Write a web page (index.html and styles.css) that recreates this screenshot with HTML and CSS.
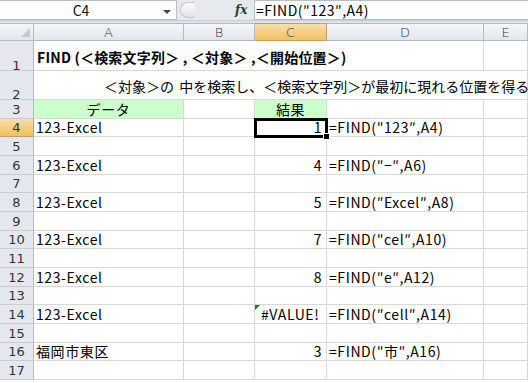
FILE: index.html
```html
<!DOCTYPE html>
<html lang="ja">
<head>
  <meta charset="UTF-8" />
  <title>FIND</title>
  <link rel="stylesheet" href="styles.css">
</head>
<body>
  <div class="formula-bar">
    <div class="name-box">
      <span class="ref">C4</span>
      <span class="drop"></span>
    </div>
    <div class="splitter"><span class="knob"></span></div>
    <div class="fx">fx</div>
    <div class="formula">=FIND(″123″,A4)</div>
  </div>
  <div class="gap"></div>

  <div class="sheet">
    <div class="corner"><span class="tri"></span></div>
    <div class="ch">A</div>
    <div class="ch">B</div>
    <div class="ch active">C</div>
    <div class="ch">D</div>
    <div class="ch">E</div>

    <div class="rh tall">1</div>
    <div class="c title span4">FIND (＜検索文字列＞ , ＜対象＞ ,＜開始位置＞)</div>
    <div class="c"></div>

    <div class="rh tall">2</div>
    <div class="c note span5">＜対象＞の 中を検索し、＜検索文字列＞が最初に現れる位置を得る</div>

    <div class="rh">3</div>
    <div class="c green center">データ</div>
    <div class="c"></div>
    <div class="c green center">結果</div>
    <div class="c"></div>
    <div class="c"></div>

    <div class="rh active">4</div>
    <div class="c">123-Excel</div>
    <div class="c"></div>
    <div class="c num selected">1<span class="handle"></span></div>
    <div class="c">=FIND(″123″,A4)</div>
    <div class="c"></div>

    <div class="rh">5</div>
    <div class="c"></div><div class="c"></div><div class="c"></div><div class="c"></div><div class="c"></div>

    <div class="rh">6</div>
    <div class="c">123-Excel</div>
    <div class="c"></div>
    <div class="c num">4</div>
    <div class="c">=FIND(″−″,A6)</div>
    <div class="c"></div>

    <div class="rh">7</div>
    <div class="c"></div><div class="c"></div><div class="c"></div><div class="c"></div><div class="c"></div>

    <div class="rh">8</div>
    <div class="c">123-Excel</div>
    <div class="c"></div>
    <div class="c num">5</div>
    <div class="c">=FIND(″Excel″,A8)</div>
    <div class="c"></div>

    <div class="rh">9</div>
    <div class="c"></div><div class="c"></div><div class="c"></div><div class="c"></div><div class="c"></div>

    <div class="rh">10</div>
    <div class="c">123-Excel</div>
    <div class="c"></div>
    <div class="c num">7</div>
    <div class="c">=FIND(″cel″,A10)</div>
    <div class="c"></div>

    <div class="rh">11</div>
    <div class="c"></div><div class="c"></div><div class="c"></div><div class="c"></div><div class="c"></div>

    <div class="rh">12</div>
    <div class="c">123-Excel</div>
    <div class="c"></div>
    <div class="c num">8</div>
    <div class="c">=FIND(″e″,A12)</div>
    <div class="c"></div>

    <div class="rh">13</div>
    <div class="c"></div><div class="c"></div><div class="c"></div><div class="c"></div><div class="c"></div>

    <div class="rh">14</div>
    <div class="c">123-Excel</div>
    <div class="c"></div>
    <div class="c error"><span class="flag"></span>#VALUE!</div>
    <div class="c">=FIND(″cell″,A14)</div>
    <div class="c"></div>

    <div class="rh">15</div>
    <div class="c"></div><div class="c"></div><div class="c"></div><div class="c"></div><div class="c"></div>

    <div class="rh">16</div>
    <div class="c">福岡市東区</div>
    <div class="c"></div>
    <div class="c num">3</div>
    <div class="c">=FIND(″市″,A16)</div>
    <div class="c"></div>

    <div class="rh">17</div>
    <div class="c"></div><div class="c"></div><div class="c"></div><div class="c"></div><div class="c"></div>
  </div>
</body>
</html>
```

FILE: styles.css
```css
* {
  box-sizing: border-box;
}
body {
  margin: 0;
  width: 528px;
  height: 383px;
  overflow: hidden;
  background: #fff;
  font-family: "Noto Sans CJK JP", "Noto Sans", sans-serif;
  font-size: 14px;
  color: #000;
}
.formula-bar {
  display: flex;
  height: 21px;
  background: #e6eaef;
  border-bottom: 1px solid #c5ccd5;
}
.name-box {
  width: 177px;
  background: #fff;
  border: 1px solid #b7bec8;
  border-left: none;
  display: flex;
  align-items: center;
  position: relative;
}
.ref {
  flex: 1;
  text-align: center;
  font-size: 14px;
  padding-right: 14px;
  color: #111;
}
.drop {
  position: absolute;
  right: 5px;
  top: 9px;
  border-left: 4px solid transparent;
  border-right: 4px solid transparent;
  border-top: 4px solid #444;
}
.splitter {
  width: 58px;
  position: relative;
}
.knob {
  position: absolute;
  left: 3px;
  top: 2px;
  width: 15px;
  height: 16px;
  border-radius: 8px 0 0 8px;
  border: 1px solid #c3c8cf;
  border-right: none;
  background: linear-gradient(#fbfcfd, #dfe3e8);
}
.fx {
  width: 19px;
  font-family: "DejaVu Serif", serif;
  font-style: italic;
  font-weight: bold;
  font-size: 12px;
  line-height: 20px;
  color: #333;
}
.formula {
  flex: 1;
  background: #fff;
  border: 1px solid #b7bec8;
  border-right: none;
  padding-left: 1px;
  line-height: 18px;
  font-size: 14px;
  letter-spacing: 0.5px;
  white-space: nowrap;
}
.gap {
  height: 2px;
  background: #dde2e8;
}
.sheet {
  display: grid;
  grid-template-columns: 34px 150px 71px 72px 157px 44px;
  grid-template-rows: 18px 30px 29px repeat(15, 18.67px);
}
.corner,
.ch,
.rh {
  background: linear-gradient(#f4f6f8, #e2e6eb);
  border-right: 1px solid #b3bac4;
  border-bottom: 1px solid #b3bac4;
  color: #333;
  font-family: "DejaVu Sans", sans-serif;
  font-size: 13px;
}
.corner {
  position: relative;
  border-top: 1px solid #b3bac4;
}
.tri {
  position: absolute;
  right: 3px;
  bottom: 3px;
  border-left: 9px solid transparent;
  border-bottom: 9px solid #c3c9d1;
}
.ch {
  border-top: 1px solid #b3bac4;
  display: flex;
  align-items: center;
  justify-content: center;
  font-weight: 300;
}
.rh {
  display: flex;
  align-items: flex-end;
  justify-content: center;
  line-height: 17px;
  background: #e4e8ee;
  border-bottom: 1px solid #c8cdd4;
}
.rh.tall {
  line-height: 9px;
}
.ch.active,
.rh.active {
  background: linear-gradient(#f9dea6, #f1c060);
  border-color: #c2a064;
}
.c {
  border-right: 1px solid #d8d8d8;
  border-bottom: 1px solid #d8d8d8;
  display: flex;
  align-items: center;
  padding: 0 2px;
  white-space: nowrap;
  position: relative;
  letter-spacing: 0.6px;
}
.span4 {
  grid-column: span 4;
}
.span5 {
  grid-column: span 5;
}
.title {
  font-weight: bold;
  font-size: 14px;
  padding-left: 3px;
  padding-top: 2px;
  letter-spacing: 0.2px;
}
.note {
  padding-left: 70px;
  padding-top: 1px;
  letter-spacing: 0;
  word-spacing: 2px;
}
.green {
  background: #ccffcc;
}
.center {
  justify-content: center;
}
.num {
  justify-content: flex-end;
  padding-right: 4px;
}
.selected {
  outline: 3px solid #000;
  outline-offset: -2px;
  z-index: 3;
}
.handle {
  position: absolute;
  right: -4px;
  bottom: -4px;
  width: 7px;
  height: 7px;
  background: #000;
  border: 1px solid #fff;
  z-index: 4;
}
.error {
  overflow: hidden;
  padding-left: 6px;
}
.flag {
  position: absolute;
  left: 0;
  top: 0;
  border-right: 5px solid transparent;
  border-top: 5px solid #1a7a1a;
}
```
